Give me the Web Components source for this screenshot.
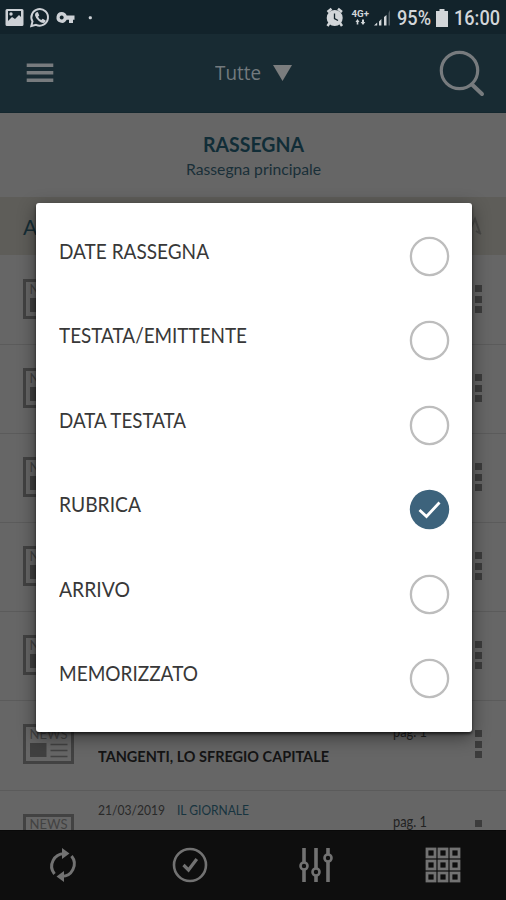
<!DOCTYPE html>
<html lang="it"><head><meta charset="utf-8"><title>Rassegna</title>
<style>html,body{margin:0;height:900px;overflow:hidden;background:#666}body{font-family:Lato,"Open Sans",sans-serif}</style></head>
<body>
<rassegna-app></rassegna-app>
<script>
const define=(name,css,html,setup)=>{
  const t=document.createElement('template');
  t.innerHTML=`<style>:host{display:block;box-sizing:border-box}*{box-sizing:border-box}svg{display:block;overflow:visible}${css}</style>${html}`;
  customElements.define(name,class extends HTMLElement{
    constructor(){super();this.attachShadow({mode:'open'}).append(t.content.cloneNode(true));}
    connectedCallback(){setup&&setup(this,this.shadowRoot);}
  });
};
/* Text condensed or widened to the width given by "w" */
define('fit-text',':host{display:block;white-space:nowrap;width:var(--w);flex:none}span{display:inline-block;transform-origin:0 50%}','<span><slot></slot></span>',(h,r)=>{
  const w=+h.getAttribute('w'),s=r.querySelector('span');
  h.style.setProperty('--w',w+'px');
  s.style.transform=`scaleX(${w/s.getBoundingClientRect().width})`;
});
define('status-bar',`:host{height:34px;background:#12232b;color:#d2d6d9;display:flex;align-items:center;padding:1px 6px 0 5px;font:500 20px/24px Roboto,sans-serif}
.r{margin-left:auto;display:flex;align-items:center}`,`
<svg width="90" height="24" viewBox="5 6 90 24" fill="#cdd1d6">
 <path fill-rule="evenodd" d="M7 9h15q1.500 0 1.500 1.500v14q0 1.500-1.500 1.500H7q-1.500 0-1.500-1.500v-14Q5.500 9 7 9zM8 11v10l4-4 3 2 4-4 2 2v-6z"/><circle cx="11" cy="14" r="1.700"/>
 <path d="M32.500 21.500A8.300 8.300 0 1 1 36 24.800L31.300 26z" fill="none" stroke="#cdd1d6" stroke-width="2"/>
 <path d="M36 12.500l1.800-.4 1.500 3.300-1.300 1.300q1 2.300 3.300 3.400l1.400-1.300 3 1.600q.2 2-2.300 2.500-2 .2-4.800-2.200-3.300-3-3.600-5.400-.1-1.700 1-2.800z"/>
 <path fill-rule="evenodd" d="M61.700 12a5.300 5.300 0 0 1 5 3.500H74.500v4.300H73V23h-4v-3.200h-2.300A5.400 5.400 0 1 1 61.700 12zm0 3.400a2 2 0 1 0 .01 0z"/>
 <rect x="88.800" y="16.300" width="3" height="3" rx="1"/>
</svg>
<div class="r">
<svg width="70" height="24" viewBox="325 6 70 24" fill="#d2d6d9">
 <circle cx="334.700" cy="18" r="8"/><path d="M327.500 12l4-3.300M342 12l-4-3.300M329.500 23l-2 3M340 23l2 3" stroke="#d2d6d9" stroke-width="2.500"/><path d="M334.500 13.500v5l3.500 2" fill="none" stroke="#12232b" stroke-width="1.300"/>
 <text x="351.500" y="17" font-family="Roboto" font-size="9" font-weight="700" textLength="17.500" lengthAdjust="spacingAndGlyphs">4G+</text>
 <path d="M357.500 19l2 3h-1.200v2.500h-1.600V22h-1.200zM363 25l-2.300-3h1.300v-2.500h2V22h1.300z"/>
 <path d="M374 25.500l3.200-3v3zM379 21.500l2.400-2.500v6.500H379zM384 17l2.500-2v10.500H384z"/><path d="M388.500 13l1.500-3v15.500h-1.500z" opacity=".35"/>
</svg>
<fit-text w="34" style="margin-left:2px">95%</fit-text>
<svg width="12" height="18" viewBox="0 0 12 18" style="margin:0 6px 0 5px" fill="#d2d6d9"><path d="M3.500 0h5v2H12v16H0V2h3.500z"/></svg>
<fit-text w="46">16:00</fit-text></div>`);
define('app-header',`:host{height:79px;background:#182b33;display:grid;grid-template-columns:1fr auto 1fr;align-items:center;padding:0 21px 0 26px;border-bottom:1px solid #14272e;color:#737a7e}
.m{display:flex;align-items:center;gap:12px;font:20px/26px "Open Sans",sans-serif;margin-right:4px}.s{justify-self:end}`,`
<svg width="28" height="20" fill="#777b7e"><path d="M.7.500h26.600v3.500H.7zM.7 8h26.600v3.500H.7zM.7 15.500h26.600V19H.7z"/></svg>
<div class="m"><fit-text w="46">Tutte</fit-text><svg width="19" height="16" fill="#7b7d7e"><path d="M0 0h19L9.500 16z"/></svg></div>
<svg class="s" width="46" height="48" fill="none" stroke="#777b7e"><circle cx="20.500" cy="21.500" r="18.200" stroke-width="3.200"/><path d="M33 35.500l10 9.500" stroke-width="4" stroke-linecap="round"/></svg>`);
define('review-heading',`:host{height:84px;display:flex;flex-direction:column;align-items:center;padding-top:18px;color:#112d37}
.t{font:700 20px/26px Lato,sans-serif}.d{font:15.500px/22px Lato,sans-serif;margin-top:1px;color:#192f38}`,`
<fit-text class="t" w="101">RASSEGNA</fit-text><fit-text class="d" w="135">Rassegna principale</fit-text>`);
define('group-band',`:host{height:58px;background:#5e5d59;color:#152d35;display:flex;justify-content:space-between;align-items:center;padding:0 24px 0 23px;font-size:21px}`,`<span>A</span><svg width="18" height="24" fill="none" stroke="#484846" stroke-width="2"><path d="M5 18L11 5l5 14M12 17l5 3"/></svg>`);
define('news-icon','',`<svg width="51" height="40" fill="none" stroke="#424242"><rect x="1.500" y="1.500" width="48" height="37" stroke-width="3"/><text x="6.500" y="14.500" font-family="Lato,sans-serif" font-size="12.500" textLength="38" lengthAdjust="spacingAndGlyphs" fill="#424242" stroke="none">NEWS</text><rect x="7" y="19" width="16.500" height="14" fill="#404040" stroke="none"/><path d="M27.500 20.500h17M27.500 26.500h17M27.500 32.500h17" stroke-width="1.500"/></svg>`);
define('news-row',`:host{height:89.100px;border-bottom:1px solid #5b5b5b;display:grid;grid-template-columns:51px 319px 1fr 7px;padding:0 24px 0 23px;color:#222}
news-icon{margin-top:23px}.c{padding:10px 0 0 24px}.p{padding-top:19px;font:15px/22px Lato,sans-serif}.dots{padding-top:29px;display:grid;grid-auto-rows:7px;gap:3.500px}.dots i{background:#3c3c3c}`,`
<news-icon></news-icon><div class="c"><slot></slot></div><div class="p"><slot name="page"></slot></div><div class="dots"><i></i><i></i><i></i></div>`);
define('article-summary',`.meta{display:flex;gap:12px;font:13.500px/18px Lato,sans-serif;color:#292929}.src{color:#17343f}.title{font:700 15.500px/20px Lato,sans-serif;color:#141414;margin-top:17px}`,`
<div class="meta"><slot name="date"></slot><span class="src"><slot name="source"></slot></span></div><div class="title"><slot></slot></div>`);
define('bottom-bar',`:host{height:70px;background:#0e0e0e;border-top:1px solid #090909;display:grid;grid-template-columns:repeat(4,1fr);place-items:center;padding-bottom:1px}`,`
<svg width="36" height="36" viewBox="-18 -18 36 36" fill="none" stroke="#727272" stroke-width="3"><path d="M-8.500 9A12.500 12.500 0 0 1 2-11.300M8.500-9A12.500 12.500 0 0 1-2 11.300"/><path d="M-1-17L6.500-11.500-1-6zM1 17l-7.500-5.500L1 6z" fill="#727272" stroke="none"/></svg>
<svg width="36" height="36" viewBox="-18 -18 36 36" fill="none" stroke="#727272" stroke-width="2.600"><circle r="16"/><path d="M-6.500 0l5 5L6.800-6" stroke-width="3.200"/></svg>
<svg width="36" height="36" viewBox="-18 -18 36 36" fill="#0e0e0e" stroke="#727272" stroke-width="3.600"><path d="M-12-17v34M0-17v34M12-17v34"/><circle cx="-12" cy="1" r="3.500" stroke-width="2.600"/><circle cy="7" r="3.500" stroke-width="2.600"/><circle cx="12" cy="-7" r="3.500" stroke-width="2.600"/></svg>
<svg width="36" height="36" viewBox="-18 -18 36 36" fill="none" stroke="#727272" stroke-width="2.800"><g id="g"></g></svg>`,(h,r)=>{
 r.getElementById('g').innerHTML=[-12,0,12].map(y=>[-12,0,12].map(x=>`<rect x="${x-4}" y="${y-4}" width="8" height="8"/>`).join('')).join('');
});
define('sort-option',`:host{height:84.400px;display:flex;justify-content:space-between;padding:0 22px 0 22.500px;color:#383838;font:20.500px/28px Lato,sans-serif}
.l{padding-top:2px}svg{margin-top:1px}.on{display:none}:host([checked]) .on{display:block}:host([checked]) .off{display:none}`,`
<div class="l"><slot></slot></div>
<svg class="off" width="41" height="41" fill="none" stroke="#bdbdbd" stroke-width="2.300"><circle cx="20.500" cy="20.500" r="18.600"/></svg>
<svg class="on" width="41" height="41"><circle cx="20.500" cy="20.500" r="19.700" fill="#3d637c"/><path d="M10.500 21l7 6.500L30.500 13.500" fill="none" stroke="#fff" stroke-width="2.800"/></svg>`);
define('sort-dialog',`:host{position:absolute;left:36px;top:203px;width:436px;height:528.500px;background:#fff;border-radius:3px;padding-top:32px;box-shadow:0 2px 3px #0009,0 5px 18px #0007}`,'<slot></slot>');
define('rassegna-app',`:host{position:relative;height:900px;background:#666;display:flex;flex-direction:column;overflow:hidden}.list{flex:1;min-height:0;overflow:hidden;padding-top:1px}`,`
<status-bar></status-bar><app-header></app-header><review-heading></review-heading><group-band></group-band>
<div class="list"><news-row></news-row><news-row></news-row><news-row></news-row><news-row></news-row><news-row></news-row>
<news-row><article-summary style="padding-top:18px"><fit-text w="231">TANGENTI, LO SFREGIO CAPITALE</fit-text></article-summary><fit-text slot="page" w="34">pag. 1</fit-text></news-row>
<news-row><article-summary><fit-text slot="date" w="67">21/03/2019</fit-text><fit-text slot="source" w="72">IL GIORNALE</fit-text></article-summary><fit-text slot="page" w="34">pag. 1</fit-text></news-row></div>
<bottom-bar></bottom-bar>
<sort-dialog>
<sort-option><fit-text w="150">DATE RASSEGNA</fit-text></sort-option>
<sort-option><fit-text w="188">TESTATA/EMITTENTE</fit-text></sort-option>
<sort-option><fit-text w="127">DATA TESTATA</fit-text></sort-option>
<sort-option checked><fit-text w="82">RUBRICA</fit-text></sort-option>
<sort-option><fit-text w="71">ARRIVO</fit-text></sort-option>
<sort-option><fit-text w="139">MEMORIZZATO</fit-text></sort-option>
</sort-dialog>`);
</script></body></html>
